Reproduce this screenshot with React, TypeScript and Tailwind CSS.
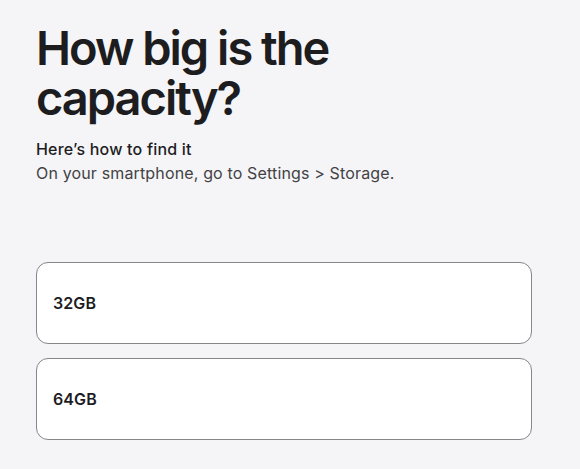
const options = ["32GB", "64GB"];

export default function App() {
  return (
    <div
      className="min-h-[469px] w-full bg-[#f5f5f7] px-9 pt-[23px] text-[#1d1d1f]"
      style={{ fontFamily: "Inter, 'Noto Sans', sans-serif" }}
    >
      <h1 className="text-[47px] font-semibold leading-[50px] tracking-[-2px]">
        How big is the
        <br />
        capacity?
      </h1>

      <div className="mt-[14px]">
        <p className="text-[16px] font-medium leading-6 tracking-[0.2px]">Here’s how to find it</p>
        <p className="text-[16px] leading-6 tracking-[0.15px] text-[#424245]">
          On your smartphone, go to Settings &gt; Storage.
        </p>
      </div>

      <div className="mt-[77px] flex w-[496px] flex-col gap-[14px]">
        {options.map((opt) => (
          <button
            key={opt}
            className="flex h-[82px] items-center rounded-xl border border-[#86868b] bg-white px-4 text-left text-[16px] font-semibold tracking-[0.1px]"
          >
            {opt}
          </button>
        ))}
      </div>
    </div>
  );
}
